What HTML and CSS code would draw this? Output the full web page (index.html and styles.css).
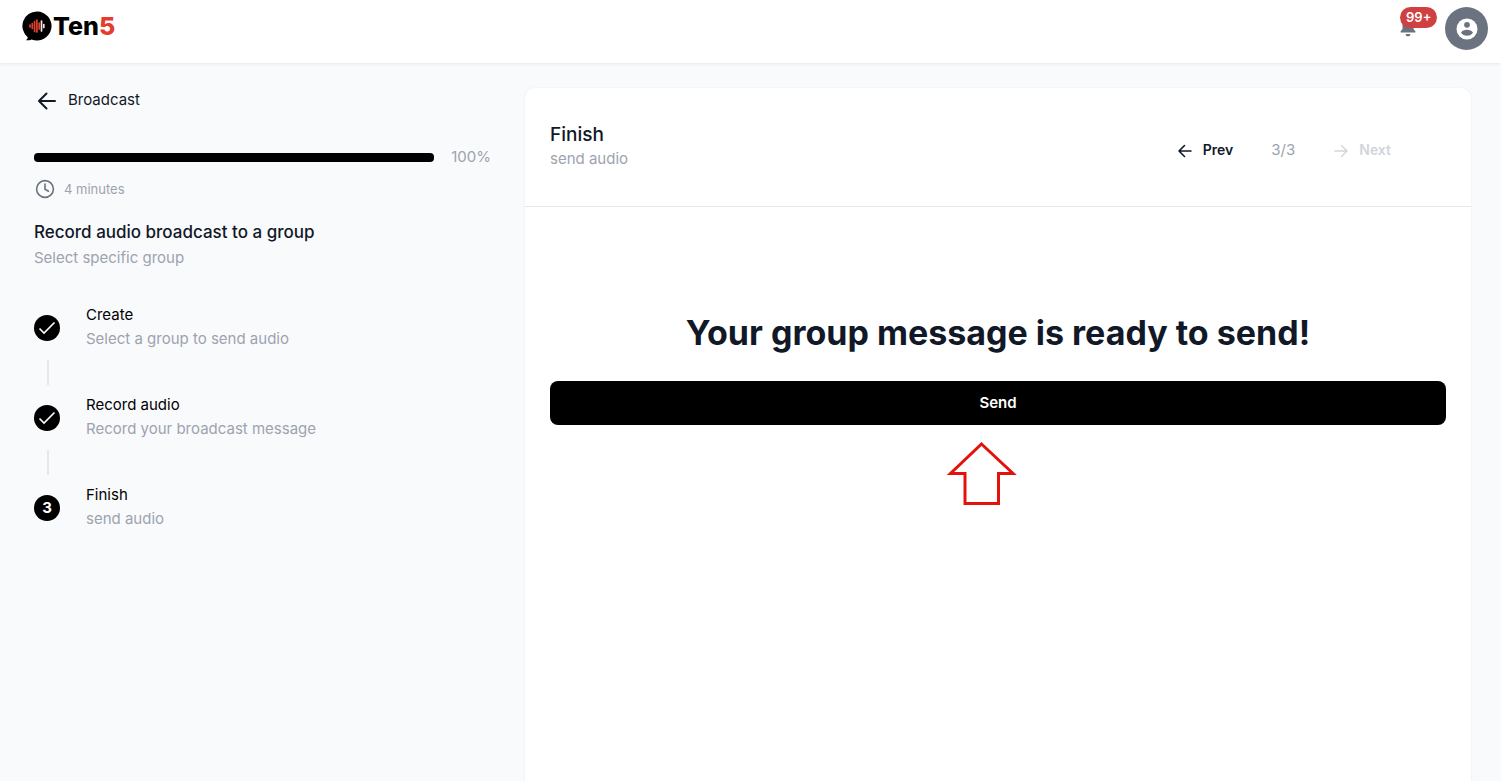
FILE: index.html
```html
<!DOCTYPE html>
<html lang="en">
<head>
    <meta charset="UTF-8">
    <meta name="viewport" content="width=device-width, initial-scale=1">
    <title>Ten5 - Broadcast</title>
    <link rel="stylesheet" href="styles.css">
</head>
<body>
    <header class="topbar">
        <a class="logo" href="#">
            <svg class="logo-mark" width="30" height="30" viewBox="0 0 30 30">
                <path d="M15 0.5A14.5 14.5 0 1 1 9.5 28.4Q7 29.6 4 29.2Q6 27.8 5.7 26.2A14.5 14.5 0 0 1 15 0.5Z" fill="#000"/>
                <g stroke-width="1.7" stroke-linecap="round" stroke="#e0402f">
                    <path d="M8 14v2M10.300 12.500v5M12.600 10.500v10M14.900 9v12"/>
                    <path d="M17.200 12v6"/>
                    <path d="M19.500 10v10M21.800 13.500v3" stroke="#f4e6e4"/>
                </g>
            </svg>
            <span class="logo-text">Ten<span class="logo-five">5</span></span>
        </a>
        <div class="topbar-actions">
            <button class="bell" type="button" aria-label="Notifications">
                <svg width="18" height="20" viewBox="0 0 18 20" fill="#6b7280">
                    <path d="M9 0.500a5.500 5.500 0 0 0-5.500 5.500v6L1.500 14.500v1h15v-1L14.500 12V6A5.500 5.500 0 0 0 9 .500ZM6.500 17a2.500 2.500 0 0 0 5 0Z"/>
                </svg>
                <span class="badge">99+</span>
            </button>
            <button class="avatar" type="button" aria-label="Account">
                <svg width="22" height="22" viewBox="0 0 22 22">
                    <circle cx="11" cy="11" r="10.500" fill="#fff"/>
                    <circle cx="11" cy="6.800" r="2.900" fill="#6b7280"/>
                    <path d="M5 14.800C6.200 12.600 8.500 11.800 11 11.800s4.800.8 6 3c-1.300 1.800-3.400 3-6 3s-4.700-1.200-6-3Z" fill="#6b7280"/>
                </svg>
            </button>
        </div>
    </header>

    <div class="layout">
        <aside class="sidebar">
            <a class="back" href="#">
                <svg width="24" height="24" viewBox="0 0 24 24" fill="none" stroke="#111827" stroke-width="2" stroke-linecap="round" stroke-linejoin="round">
                    <path d="M21 13H5M12.500 5.500L5 13l7.500 7.500"/>
                </svg>
                Broadcast
            </a>

            <div class="progress">
                <div class="progress-track"><div class="progress-fill" style="width: 100%"></div></div>
                <span>100%</span>
            </div>
            <div class="duration">
                <svg width="20" height="20" viewBox="0 0 20 20" fill="none" stroke="#6b7280" stroke-width="1.600" stroke-linecap="round" stroke-linejoin="round">
                    <circle cx="10" cy="10" r="8.400"/>
                    <path d="M10 5v5.200l3.500 2"/>
                </svg>
                4 minutes
            </div>

            <h1 class="flow-title">Record audio broadcast to a group</h1>
            <p class="flow-subtitle">Select specific group</p>

            <ol class="steps">
                <li class="step">
                    <div class="step-marker">
                        <span class="step-dot">
                            <svg width="26" height="26" viewBox="0 0 26 26" fill="none" stroke="#fff" stroke-width="1.600"><path d="M5.500 13.500l4.500 4.500L20.500 7.500"/></svg>
                        </span>
                    </div>
                    <div>
                        <h2>Create</h2>
                        <p>Select a group to send audio</p>
                    </div>
                </li>
                <li class="step">
                    <div class="step-marker">
                        <span class="step-dot">
                            <svg width="26" height="26" viewBox="0 0 26 26" fill="none" stroke="#fff" stroke-width="1.600"><path d="M5.500 13.500l4.500 4.500L20.500 7.500"/></svg>
                        </span>
                    </div>
                    <div>
                        <h2>Record audio</h2>
                        <p>Record your broadcast message</p>
                    </div>
                </li>
                <li class="step">
                    <div class="step-marker">
                        <span class="step-dot">3</span>
                    </div>
                    <div>
                        <h2>Finish</h2>
                        <p>send audio</p>
                    </div>
                </li>
            </ol>
        </aside>

        <main class="card">
            <div class="card-header">
                <div>
                    <h2>Finish</h2>
                    <p>send audio</p>
                </div>
                <nav class="pager">
                    <button type="button">
                        <svg width="16" height="16" viewBox="0 0 16 16" fill="none" stroke="currentColor" stroke-width="1.600" stroke-linecap="round" stroke-linejoin="round"><path d="M14 9H2M7.500 3.500L2 9l5.500 5.500"/></svg>
                        Prev
                    </button>
                    <span class="pager-count">3/3</span>
                    <button type="button" disabled>
                        <svg width="16" height="16" viewBox="0 0 16 16" fill="none" stroke="currentColor" stroke-width="1.400" stroke-linecap="round" stroke-linejoin="round"><path d="M2 9h12M8.500 3.500L14 9l-5.500 5.500"/></svg>
                        Next
                    </button>
                </nav>
            </div>
            <div class="card-body">
                <h2 class="ready">Your group message is ready to send!</h2>
                <button class="send" type="button">Send</button>
                <svg class="pointer" width="70" height="64" viewBox="0 0 70 64" fill="none" stroke="#e3120b" stroke-width="3">
                    <path d="M34.500 2L66 31.500H51.500V61.500H18V31.500H3.500Z"/>
                </svg>
            </div>
        </main>
    </div>
</body>
</html>
```
FILE: styles.css
```css
* { box-sizing: border-box; }
body { margin: 0; min-height: 100vh; display: flex; flex-direction: column; font-family: Inter, "Liberation Sans", sans-serif; font-size: 15px; line-height: 24px; color: #111827; background: #f9fafc; }
h1, h2, p, ol { margin: 0; padding: 0; font-weight: 400; }
a { color: inherit; text-decoration: none; }
button { font: inherit; color: inherit; background: none; border: none; padding: 0; cursor: pointer; }
svg { display: block; flex-shrink: 0; }

.topbar { display: flex; justify-content: space-between; align-items: flex-start; height: 63px; padding: 7px 13px 0 22px; background: #fff; box-shadow: 0 1px 3px rgba(0, 0, 0, 0.08); }
.logo { display: flex; align-items: center; gap: 1px; padding-top: 4px; }
.logo-text { font-size: 25px; line-height: 30px; font-weight: 800; color: #000; }
.logo-five { color: #e63b2e; }
.topbar-actions { display: flex; gap: 28px; }
.bell { position: relative; padding-top: 10px; align-self: flex-start; }
.badge { position: absolute; top: 0; left: 1px; padding: 0 6px; border-radius: 11px; background: #d04040; color: #fff; font-size: 13px; line-height: 21px; font-weight: 600; }
.avatar { display: flex; align-items: center; justify-content: center; width: 43px; height: 43px; border-radius: 50%; background: #6b7280; }

.layout { flex: 1; display: flex; padding: 25px 30px 0 0; }
.sidebar { width: 525px; flex: 0 1 525px; padding: 0 34px; }
.back { display: flex; align-items: center; gap: 10px; }
.progress { display: flex; align-items: center; gap: 17px; margin-top: 33px; color: #9ca3af; }
.progress-track { flex: 1; height: 9px; border-radius: 4px; background: #e5e7eb; }
.progress-fill { height: 100%; border-radius: 4px; background: #000; }
.duration { display: flex; align-items: center; gap: 9px; margin-top: 8px; padding-left: 1px; font-size: 13px; color: #9ca3af; }
.flow-title { margin-top: 18px; font-size: 17px; line-height: 26px; font-weight: 500; }
.flow-subtitle { line-height: 26px; color: #9ca3af; }

.steps { list-style: none; margin-top: 32px; }
.step { display: flex; gap: 26px; min-height: 90px; }
.step h2 { font-size: 15px; color: #000; }
.step p { color: #9ca3af; }
.step-marker { display: flex; flex-direction: column; align-items: center; padding-top: 12px; }
.step-dot { display: flex; align-items: center; justify-content: center; width: 26px; height: 26px; border-radius: 50%; background: #000; color: #fff; font-weight: 700; }
.step:not(:last-child) .step-marker::after { content: ""; width: 2px; height: 25px; margin: 19px 0 0 2px; background: #e5e7eb; }

.card { flex: 1; background: #fff; border-radius: 10px 10px 0 0; box-shadow: 0 0 2px rgba(0, 0, 0, 0.08); }
.card-header { display: flex; justify-content: space-between; align-items: flex-end; padding: 35px 25px; border-bottom: 1px solid #e5e7eb; }
.card-header h2 { font-size: 19px; font-weight: 500; }
.card-header p { color: #9ca3af; }
.pager { display: flex; align-items: center; gap: 38px; padding: 0 55px 9px 0; }
.pager button { display: flex; align-items: center; gap: 10px; font-size: 14px; font-weight: 600; }
.pager button:disabled { color: #d1d5db; cursor: default; }
.pager-count { font-size: 15px; color: #9ca3af; }
.card-body { display: flex; flex-direction: column; align-items: center; padding: 104px 25px 25px; }
.ready { font-size: 34px; line-height: 44px; font-weight: 700; text-align: center; }
.send { width: 100%; margin-top: 26px; padding: 10px; border-radius: 8px; background: #000; color: #fff; font-weight: 600; }
.pointer { margin: 17px 32px 0 0; }
```
